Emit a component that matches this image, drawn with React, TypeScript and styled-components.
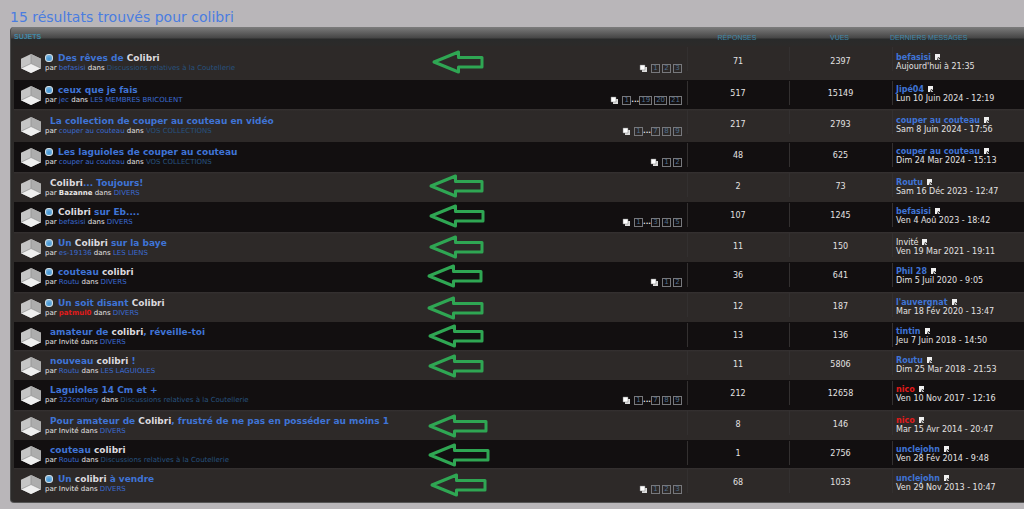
import React from 'react';
import styled, { createGlobalStyle } from 'styled-components';

const GlobalStyle = createGlobalStyle`
  body {
    margin: 0;
    background: #b9b6b9;
    color: #e4e2e2;
    font-family: "DejaVu Sans", Verdana, sans-serif;
    font-size: 8px;
  }
`;

const Page = styled.main`
  padding: 8px 0 7px 10px;
`;

const Heading = styled.h1`
  margin: 0 0 1px;
  color: #4a7de0;
  font-size: 14px;
  font-weight: 400;
  line-height: 18px;
`;

const Panel = styled.section`
  padding-left: 3px;
  overflow: hidden;
  border-bottom: 1px solid #555;
  border-left: 1px solid #4a4a4a;
  border-radius: 4px 0 0 4px;
  background: linear-gradient(#7c7c7c, #454545 11px, #292a2a 12px, #2c2a29 20px, #2c2a29);
`;

const Table = styled.table`
  width: 100%;
  border-collapse: collapse;
  table-layout: fixed;
`;

const HeadCell = styled.th<{ $width?: number; $align?: string; $bold?: boolean }>`
  box-sizing: border-box;
  width: ${(p) => (p.$width ? `${p.$width}px` : 'auto')};
  height: 19px;
  padding: ${(p) => (p.$bold ? 4 : 5)}px 0 0;
  color: #3f88a8;
  font-family: "Liberation Sans", Arial, sans-serif;
  font-size: 7px;
  font-weight: ${(p) => (p.$bold ? 700 : 400)};
  line-height: 12px;
  text-align: ${(p) => p.$align ?? 'center'};
  text-indent: ${(p) => (p.$bold ? 0 : -2)}px;
  text-transform: uppercase;
  vertical-align: top;
`;

const Row = styled.tr<{ $height: number; $dark: boolean; $top: number }>`
  height: ${(p) => p.$height}px;
  background: ${(p) => (p.$dark ? '#120f10' : 'linear-gradient(#363232, #2d2928 2px)')};

  &:first-child {
    background: #2d2928;
  }

  td {
    padding-top: ${(p) => p.$top}px;
  }
`;

const Cell = styled.td`
  padding: 0;
  vertical-align: top;
`;

const SplitCell = styled(Cell)`
  background: linear-gradient(#333030, #333030) 0 1px / 1px 24px no-repeat;
`;

const Topic = styled.div`
  position: relative;
  display: flex;
  gap: 4px;
  padding: 0 5px 0 7px;
`;

const TopicText = styled.div`
  flex: 1;
  min-width: 0;
`;

const TitleLine = styled.div`
  display: flex;
  align-items: center;
  height: 12px;
`;

const Marker = styled.span`
  width: 6px;
  height: 6px;
  border: 1px solid #d3dde3;
  border-radius: 3px;
  background: radial-gradient(circle at 50% 65%, #3f93d4, #8fc0e2);
`;

const TitleLink = styled.a`
  margin-left: 5px;
  color: #3f74d6;
  font-size: 9px;
  font-weight: 700;
  line-height: 12px;
  text-decoration: none;
  white-space: nowrap;

  em {
    color: #dcdadf;
    font-style: normal;
  }
`;

const Meta = styled.div`
  display: flex;
  justify-content: space-between;
  font-size: 7px;
  line-height: 9px;
  white-space: nowrap;
`;

const tones = {
  user: '#3a6ad0',
  dim: '#27527f',
  admin: '#e01b1b',
  plain: '#e8e6e6',
};
type Tone = keyof typeof tones;

const MetaLink = styled.a<{ $tone: Tone; $bold?: boolean }>`
  color: ${(p) => tones[p.$tone]};
  font-weight: ${(p) => (p.$bold ? 700 : 400)};
  text-decoration: none;
`;

const Pages = styled.nav`
  display: flex;
  align-items: center;
  gap: 2px;
  height: 9px;

  svg {
    margin-right: 1px;
  }
`;

const PageLink = styled.a`
  box-sizing: border-box;
  min-width: 9px;
  height: 9px;
  padding: 0 1px;
  border: 1px solid #77787c;
  color: #52708f;
  line-height: 7px;
  text-align: center;
  text-decoration: none;
`;

const Dots = styled.span`
  margin: 0 -2px;
  font-weight: 700;
`;

const Count = styled.div`
  padding-top: 4px;
  line-height: 12px;
  text-align: center;
`;

const Last = styled.div`
  padding-left: 4px;
  line-height: 9px;
  white-space: nowrap;
`;

const LastUser = styled.div`
  display: flex;
  align-items: center;
  gap: 4px;
  height: 10px;
`;

const UserLink = styled.a<{ $tone: Tone }>`
  color: ${(p) => (p.$tone === 'user' ? '#3f74d6' : tones[p.$tone])};
  font-weight: ${(p) => (p.$tone === 'plain' ? 400 : 700)};
  text-decoration: none;
`;

const CubeSvg = styled.svg`
  flex: none;
  margin-top: 2px;
`;

const ArrowSvg = styled.svg<{ $left: number; $top: number }>`
  position: absolute;
  left: ${(p) => p.$left}px;
  top: ${(p) => p.$top}px;
`;

const Cube = () => (
  <CubeSvg width="20" height="19" viewBox="0 0 20 20" preserveAspectRatio="none" aria-hidden="true">
    <path d="M10 0 20 5V15L10 20 0 15V5Z" fill="#c5c5c5" />
    <path d="M10 0 20 5V15L10 10Z" fill="#adadad" />
    <path d="M0 15 10 10 20 15 10 20Z" fill="#efefef" />
    <path d="M10 0V10L0 15M10 10 20 15" fill="none" stroke="#8f8f8f" strokeWidth=".7" />
  </CubeSvg>
);

const Arrow = ({ left, top, width }: { left: number; top: number; width: number }) => (
  <ArrowSvg $left={left} $top={top} width={width} height="24" viewBox={`0 0 ${width} 24`} aria-hidden="true">
    <path
      d={`M2 12 26.500 2V7.500H${width - 2}V17H26.500V22Z`}
      fill="none"
      stroke="#2fa653"
      strokeWidth="3"
      strokeLinejoin="round"
    />
  </ArrowSvg>
);

const PagesIcon = () => (
  <svg width="9" height="9" viewBox="0 0 9 9" aria-hidden="true">
    <path d="M3 3H8V8H3Z" fill="#dcdcdc" />
    <path d="M1 1H6V6H1Z" fill="#fff" stroke="#777" strokeWidth=".5" />
  </svg>
);

const LastIcon = () => (
  <svg width="6" height="7" viewBox="0 0 6 7" aria-hidden="true">
    <path d="M0 0H5V4L3 3 2 6H0Z" fill="#f0f0f0" />
    <path d="M3 4H4V5H5V6H3Z" fill="#b5b5b5" />
  </svg>
);

interface TopicRow {
  title: string;
  marker?: boolean;
  author: string;
  authorTone?: Tone;
  authorBold?: boolean;
  forum: string;
  dim?: boolean;
  pages?: string[];
  replies: number;
  views: number;
  last: string;
  lastTone?: Tone;
  date: string;
  height: number;
  top: number;
  arrow?: [left: number, top: number, width: number];
}

const COUTELLERIE = 'Discussions relatives à la Coutellerie';

const topics: TopicRow[] = [
  { title: 'Des rêves de *Colibri*', marker: true, author: 'befasisi', forum: COUTELLERIE, dim: true, pages: ['1', '2', '3'], replies: 71, views: 2397, last: 'befasisi', date: "Aujourd'hui à 21:35", height: 34, top: 6, arrow: [418, -2, 52] },
  { title: 'ceux que je fais', marker: true, author: 'jec', forum: 'LES MEMBRES BRICOLENT', pages: ['1', '...', '19', '20', '21'], replies: 517, views: 15149, last: 'Jipé04', date: 'Lun 10 Juin 2024 - 12:19', height: 29, top: 4 },
  { title: 'La collection de couper au couteau en vidéo', author: 'couper au couteau', forum: 'VOS COLLECTIONS', dim: true, pages: ['1', '...', '7', '8', '9'], replies: 217, views: 2793, last: 'couper au couteau', date: 'Sam 8 Juin 2024 - 17:56', height: 33, top: 6 },
  { title: 'Les laguioles de couper au couteau', marker: true, author: 'couper au couteau', forum: 'VOS COLLECTIONS', dim: true, pages: ['1', '2'], replies: 48, views: 625, last: 'couper au couteau', date: 'Dim 24 Mar 2024 - 15:13', height: 30, top: 4 },
  { title: '*Colibri*... Toujours!', author: 'Bazanne', authorTone: 'plain', authorBold: true, forum: 'DIVERS', replies: 2, views: 73, last: 'Routu', date: 'Sam 16 Déc 2023 - 12:47', height: 30, top: 5, arrow: [415, -3, 55] },
  { title: '*Colibri* sur Eb....', marker: true, author: 'befasisi', forum: 'DIVERS', pages: ['1', '...', '3', '4', '5'], replies: 107, views: 1245, last: 'befasisi', date: 'Ven 4 Aoû 2023 - 18:42', height: 30, top: 4, arrow: [415, -2, 56] },
  { title: 'Un *Colibri* sur la baye', marker: true, author: 'es-19136', forum: 'LES LIENS', replies: 11, views: 150, last: 'Invité', lastTone: 'plain', date: 'Ven 19 Mar 2021 - 19:11', height: 30, top: 5, arrow: [415, -2, 55] },
  { title: 'couteau *colibri*', marker: true, author: 'Routu', forum: 'DIVERS', pages: ['1', '2'], replies: 36, views: 641, last: 'Phil 28', date: 'Dim 5 Juil 2020 - 9:05', height: 30, top: 4, arrow: [413, -2, 56] },
  { title: 'Un soit disant *Colibri*', marker: true, author: 'patmul0', authorTone: 'admin', authorBold: true, forum: 'DIVERS', replies: 12, views: 187, last: "l'auvergnat", date: 'Mar 18 Fév 2020 - 13:47', height: 30, top: 5, arrow: [413, -1, 57] },
  { title: 'amateur de *colibri*, réveille-toi', author: 'Invité', authorTone: 'plain', forum: 'DIVERS', replies: 13, views: 136, last: 'tintin', date: 'Jeu 7 Juin 2018 - 14:50', height: 28, top: 4, arrow: [414, -2, 56] },
  { title: 'nouveau *colibri* !', author: 'Routu', forum: 'LES LAGUIOLES', replies: 11, views: 5806, last: 'Routu', date: 'Dim 25 Mar 2018 - 21:53', height: 30, top: 5, arrow: [414, -1, 56] },
  { title: 'Laguioles 14 Cm et +', author: '322century', forum: COUTELLERIE, dim: true, pages: ['1', '...', '7', '8', '9'], replies: 212, views: 12658, last: 'nico', lastTone: 'admin', date: 'Ven 10 Nov 2017 - 12:16', height: 30, top: 4 },
  { title: 'Pour amateur de *Colibri*, frustré de ne pas en posséder au moins 1', author: 'Invité', authorTone: 'plain', forum: 'DIVERS', replies: 8, views: 146, last: 'nico', lastTone: 'admin', date: 'Mar 15 Avr 2014 - 20:47', height: 30, top: 5, arrow: [414, -1, 60] },
  { title: 'couteau *colibri*', author: 'Routu', forum: COUTELLERIE, dim: true, replies: 1, views: 2756, last: 'unclejohn', date: 'Ven 28 Fév 2014 - 9:48', height: 28, top: 4, arrow: [414, -1, 62] },
  { title: 'Un *colibri* à vendre', marker: true, author: 'Invité', authorTone: 'plain', forum: 'DIVERS', pages: ['1', '2', '3'], replies: 68, views: 1033, last: 'unclejohn', date: 'Ven 29 Nov 2013 - 10:47', height: 34, top: 5, arrow: [416, 0, 57] },
];

const highlight = (title: string) =>
  title.split('*').map((part, i) => (i % 2 ? <em key={i}>{part}</em> : part));

export default function App() {
  return (
    <Page>
      <GlobalStyle />
      <Heading>15 résultats trouvés pour colibri</Heading>
      <Panel>
        <Table>
          <thead>
            <tr>
              <HeadCell $align="left" $bold>Sujets</HeadCell>
              <HeadCell $width={102}>Réponses</HeadCell>
              <HeadCell $width={103}>Vues</HeadCell>
              <HeadCell $width={132} $align="left">Derniers messages</HeadCell>
            </tr>
          </thead>
          <tbody>
            {topics.map((t, i) => (
              <Row key={i} $height={t.height} $dark={i % 2 === 1} $top={t.top}>
                <Cell>
                  <Topic>
                    <Cube />
                    <TopicText>
                      <TitleLine>
                        {t.marker && <Marker />}
                        <TitleLink href="#">{highlight(t.title)}</TitleLink>
                      </TitleLine>
                      <Meta>
                        <span>
                          par{' '}
                          <MetaLink href="#" $tone={t.authorTone ?? 'user'} $bold={t.authorBold}>{t.author}</MetaLink>
                          {' '}dans{' '}
                          <MetaLink href="#" $tone={t.dim ? 'dim' : 'user'}>{t.forum}</MetaLink>
                        </span>
                        {t.pages && (
                          <Pages aria-label="Pages">
                            <PagesIcon />
                            {t.pages.map((p) =>
                              p === '...' ? <Dots key={p}>...</Dots> : <PageLink key={p} href="#">{p}</PageLink>,
                            )}
                          </Pages>
                        )}
                      </Meta>
                    </TopicText>
                    {t.arrow && <Arrow left={t.arrow[0]} top={t.arrow[1]} width={t.arrow[2]} />}
                  </Topic>
                </Cell>
                <SplitCell><Count>{t.replies}</Count></SplitCell>
                <SplitCell><Count>{t.views}</Count></SplitCell>
                <SplitCell>
                  <Last>
                    <LastUser>
                      <UserLink href="#" $tone={t.lastTone ?? 'user'}>{t.last}</UserLink>
                      <LastIcon />
                    </LastUser>
                    {t.date}
                  </Last>
                </SplitCell>
              </Row>
            ))}
          </tbody>
        </Table>
      </Panel>
    </Page>
  );
}
